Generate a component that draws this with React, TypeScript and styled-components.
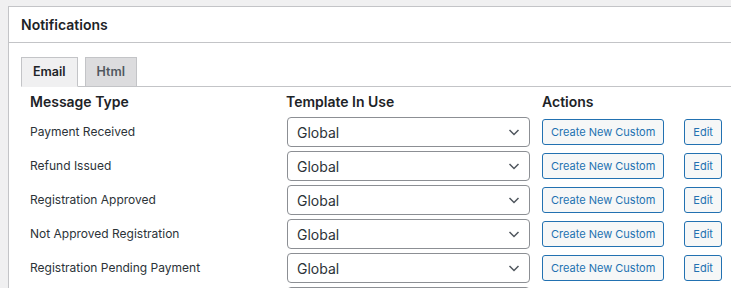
import { Fragment } from 'react';
import styled, { createGlobalStyle } from 'styled-components';

const GlobalStyle = createGlobalStyle`
  html, body {
    margin: 0;
    padding: 0;
    background: #f0f0f1;
    font-family: Inter, "Liberation Sans", sans-serif;
    color: #3c434a;
  }
`;

const Page = styled.div`
  padding: 6px 0 0 8px;
  height: 288px;
  overflow: hidden;
  box-sizing: border-box;
`;

const Panel = styled.div`
  background: #fff;
  border: 1px solid #c3c4c7;
  margin-right: -20px;
  min-height: 400px;
`;

const PanelHeader = styled.h2`
  margin: 0;
  padding: 8px 12px;
  font-size: 14px;
  line-height: 19px;
  font-weight: 600;
  color: #1d2327;
  border-bottom: 1px solid #c3c4c7;
`;

const PanelBody = styled.div`
  padding: 14px 0 0 12px;
`;

const TabBar = styled.div`
  display: flex;
  align-items: flex-end;
  gap: 7px;
  border-bottom: 1px solid #c3c4c7;
`;

const Tab = styled.div<{ $active?: boolean }>`
  box-sizing: border-box;
  height: 30px;
  padding: 0 11px;
  margin-bottom: -1px;
  border: 1px solid #c3c4c7;
  border-bottom-color: ${({ $active }) => ($active ? '#f0f0f1' : '#c3c4c7')};
  background: ${({ $active }) => ($active ? '#f0f0f1' : '#dcdcde')};
  color: ${({ $active }) => ($active ? '#1d2327' : '#50575e')};
  font-size: 12.5px;
  font-weight: 600;
  line-height: 28px;
`;

const Table = styled.div`
  display: grid;
  grid-template-columns: 256px 256px auto;
  row-gap: 4px;
  padding: 5px 0 0 9px;
`;

const HeadCell = styled.div`
  font-size: 14px;
  font-weight: 600;
  line-height: 20px;
  color: #1d2327;
  margin-bottom: 1px;
`;

const Label = styled.div`
  font-size: 12px;
  line-height: 30px;
  color: #2c3338;
`;

const SelectBox = styled.div`
  box-sizing: border-box;
  width: 243px;
  height: 30px;
  margin-left: 1px;
  display: flex;
  align-items: center;
  justify-content: space-between;
  padding: 0 7px 0 9px;
  border: 1px solid #8c8f94;
  border-radius: 4px;
  font-size: 14px;
  color: #2c3338;
  background: #fff;
`;

const Actions = styled.div`
  display: flex;
  align-items: center;
  gap: 20px;
`;

const SmallButton = styled.button`
  box-sizing: border-box;
  height: 26px;
  padding: 0 8px;
  border: 1px solid #2271b1;
  border-radius: 3px;
  background: #f6f7f7;
  color: #2271b1;
  font-family: inherit;
  font-size: 11px;
  line-height: 24px;
  cursor: pointer;
`;

const Chevron = () => (
  <svg width="16" height="16" viewBox="0 0 16 16" fill="none">
    <path d="M3.5 6l4.5 4.5L12.5 6" stroke="#50575e" strokeWidth="1.5" />
  </svg>
);

const rows = [
  'Payment Received',
  'Refund Issued',
  'Registration Approved',
  'Not Approved Registration',
  'Registration Pending Payment',
];

export default function App() {
  return (
    <>
      <GlobalStyle />
      <Page>
        <Panel>
          <PanelHeader>Notifications</PanelHeader>
          <PanelBody>
            <TabBar>
              <Tab $active>Email</Tab>
              <Tab>Html</Tab>
            </TabBar>
            <Table>
              <HeadCell>Message Type</HeadCell>
              <HeadCell>Template In Use</HeadCell>
              <HeadCell>Actions</HeadCell>
              {rows.map((r) => (
                <Fragment key={r}>
                  <Label>{r}</Label>
                  <SelectBox>
                    <span>Global</span>
                    <Chevron />
                  </SelectBox>
                  <Actions>
                    <SmallButton>Create New Custom</SmallButton>
                    <SmallButton>Edit</SmallButton>
                  </Actions>
                </Fragment>
              ))}
              <div />
              <SelectBox aria-hidden />
              <div />
            </Table>
          </PanelBody>
        </Panel>
      </Page>
    </>
  );
}
